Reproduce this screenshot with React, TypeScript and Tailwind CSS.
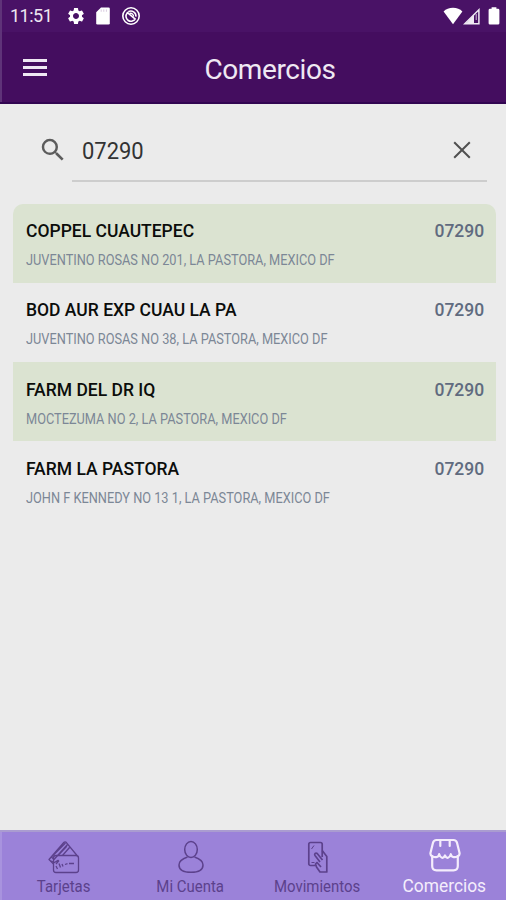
import { MdSearch, MdSettings } from 'react-icons/md';

type Store = {
  name: string;
  address: string;
  zip: string;
};

const stores: Store[] = [
  { name: 'COPPEL CUAUTEPEC', address: 'JUVENTINO ROSAS NO 201, LA PASTORA, MEXICO DF', zip: '07290' },
  { name: 'BOD AUR EXP CUAU LA PA', address: 'JUVENTINO ROSAS NO 38, LA PASTORA, MEXICO DF', zip: '07290' },
  { name: 'FARM DEL DR IQ', address: 'MOCTEZUMA NO 2, LA PASTORA, MEXICO DF', zip: '07290' },
  { name: 'FARM LA PASTORA', address: 'JOHN F KENNEDY NO 13 1, LA PASTORA, MEXICO DF', zip: '07290' },
];

function StatusBar() {
  return (
    <div className="flex h-8 items-center bg-[#491266] pr-[6px] pb-px pl-[10px] text-white shadow-[inset_2px_0_0_#5f3379]">
      <span className="w-[56px] text-[18px] leading-8 tracking-[-0.5px] text-[#eee6f2]">11:51</span>
      <MdSettings className="h-5 w-5" />
      <svg viewBox="0 0 14 18" className="ml-[10px] h-[18px] w-[14px]" fill="currentColor">
        <path d="M5 0.5h7.5a1.3 1.3 0 0 1 1.3 1.3v14.4a1.3 1.3 0 0 1-1.3 1.3h-11a1.3 1.3 0 0 1-1.3-1.3V5.3z" />
        <path d="M5.2 2.4v2.4M7.8 2.4v2.4M10.4 2.4v2.4" stroke="#d9cbe0" strokeWidth="1" />
      </svg>
      <svg viewBox="0 0 20 20" className="ml-[11px] h-5 w-5" fill="none" stroke="currentColor">
        <circle cx="10" cy="10" r="8.2" strokeWidth="1.6" />
        <path d="M6.2 7a5 5 0 1 0 8.3 5.4M7.3 5.8a5 5 0 0 1 7.6 4.8M5.8 6.2l8.8 7.2" strokeWidth="1.6" />
        <path d="M8.6 7.4a3 3 0 0 1 3.9 3.2" strokeWidth="1.3" />
      </svg>
      <div className="ml-auto flex items-center">
        <svg viewBox="0 0 20 18" className="h-[18px] w-5" fill="currentColor">
          <path d="M0.6 4.6C3 1.9 6.2 0.8 10 0.8s7 1.1 9.4 3.8L10 17.2z" />
        </svg>
        <svg viewBox="0 0 18 18" className="h-[18px] w-[18px]" fill="none">
          <path d="M1.8 16.8H15.9V2.7z" stroke="#efe9f3" strokeWidth="1.5" />
          <path d="M11 7.5V16.5H3z" fill="#efe9f3" />
          <path d="M13.2 7v6" stroke="#efe9f3" strokeWidth="0.8" />
        </svg>
        <svg viewBox="0 0 12 18" className="ml-[7px] h-[18px] w-3" fill="currentColor">
          <path d="M3.6 0.2h4.8v1.6h1.6a1.4 1.4 0 0 1 1.4 1.4v13a1.4 1.4 0 0 1-1.4 1.4H2a1.4 1.4 0 0 1-1.4-1.4v-13A1.4 1.4 0 0 1 2 1.8h1.6z" />
        </svg>
      </div>
    </div>
  );
}

function Header() {
  return (
    <header className="grid h-[72px] grid-cols-[1fr_auto_1fr] items-center border-b-2 border-[#310551] bg-[#440d5f] shadow-[inset_2px_0_0_#5f3379]">
      <button type="button" aria-label="Menu" className="ml-[23px] flex w-6 flex-col gap-[4px] pt-px">
        <span className="h-[3px] bg-[#efe7f3]" />
        <span className="h-[3px] bg-[#efe7f3]" />
        <span className="h-[3px] bg-[#efe7f3]" />
      </button>
      <h1 className="pt-[5px] pl-[34px] text-[28px] leading-8 tracking-[-0.4px] text-[#efe8f3]">Comercios</h1>
    </header>
  );
}

function SearchBar() {
  return (
    <div className="flex h-[78px] pr-[19px] pl-[38px]">
      <MdSearch className="mt-[31px] h-[30px] w-[30px] text-[#5c5c5c]" />
      <div className="ml-[4px] flex flex-1 items-center justify-between border-b-2 border-[#cdcdcd] pt-[18px] pr-[16px] pl-[10px]">
        <span className="origin-left scale-x-[0.915] text-[24px] leading-8 text-[#333333]">07290</span>
        <svg viewBox="0 0 18 18" className="mb-[2px] h-[18px] w-[18px]" fill="none" stroke="#505050" strokeWidth="2">
          <path d="M1.2 1.2l15.6 15.6M16.8 1.2L1.2 16.8" />
        </svg>
      </div>
    </div>
  );
}

function StoreRow({ store }: { store: Store }) {
  return (
    <li className="h-[79.25px] pt-[16.5px] pr-[12px] pl-[13px] odd:bg-[#dbe3d1]">
      <div className="flex justify-between text-[18px] leading-[22px] font-medium">
        <span className="origin-left scale-x-[0.972] text-[#0b0d0b]">{store.name}</span>
        <span className="origin-right scale-x-[0.972] text-[#606b7f]">{store.zip}</span>
      </div>
      <p className="mt-[9px] origin-left scale-x-[0.912] text-[14px] leading-[18px] text-[#7c8796]">{store.address}</p>
    </li>
  );
}

function CardsIcon() {
  return (
    <svg viewBox="0 0 32 34" className="h-[34px] w-8" fill="none" stroke="currentColor" strokeWidth="1.3" strokeLinejoin="round">
      <rect x="5.5" y="15.500" width="25" height="17" rx="2.5" />
      <path d="M5.5 24L1 19.500 16 2.300a1.500 1.500 0 0 1 2.200 0L29 15.500M3.500 17l2.500 2.500L19.500 4.500M2.200 18.400L17.500 3M10 15.500l9-9.500M21.500 7.500L14.500 15.500" />
      <path d="M3 21l3.500 1.500 4-2.500M8 24l3-3.500M8 26l1.500 3M11 23.500l1.500 4M14 24l1 2.500M17 24.500l2.500-.8M21 23.500h5" />
    </svg>
  );
}

function UserIcon() {
  return (
    <svg viewBox="0 0 28 34" className="h-[34px] w-7" fill="none" stroke="currentColor" strokeWidth="1.500">
      <ellipse cx="14" cy="9.500" rx="6.300" ry="8" />
      <path d="M10.500 17C4.500 19 2 21.300 2 25c0 4.800 4 7.300 12 7.300s12-2.500 12-7.300c0-3.700-2.500-6-8.500-8" />
    </svg>
  );
}

function PhoneIcon() {
  return (
    <svg viewBox="0 0 22 34" className="h-[34px] w-[22px]" fill="none" stroke="currentColor" strokeWidth="1.700" strokeLinejoin="round">
      <path d="M8.500 25.500H3.500a1.700 1.700 0 0 1-1.700-1.700V4.200A1.700 1.700 0 0 1 3.500 2.500h10a1.700 1.700 0 0 1 1.700 1.700V17" />
      <path d="M15.200 10.500l4.600 6v15.500H13l-3.500-5-1-3 1.500-1.500 4 4.500M15.500 20l-5.300-6.500c-1.500-1.200-3.200.4-2.200 2l5 6.500" />
      <path d="M4.500 9l2.500-3.500M4.500 22.500h3" strokeWidth="1" />
    </svg>
  );
}

function StoreIcon() {
  return (
    <svg viewBox="0 0 32 34" className="h-[34px] w-8" fill="none" stroke="currentColor" strokeWidth="2.200" strokeLinejoin="round" strokeLinecap="round">
      <path d="M3.200 18.200C1.800 17.600 1.200 16.400 1.500 14.800L4 4.800C4.500 2.800 5.500 2 7.500 2h17c2 0 3 .8 3.500 2.800L30.500 14.800c.3 1.600-.3 2.800-1.700 3.400" />
      <path d="M3.200 18.200c3.500 2 6.800.8 7-2 1.200 4 4.200 5 5.800 1.300 1.600 3.700 4.600 2.700 5.800-1.300.2 2.800 3.500 4 7 2" />
      <path d="M11.300 2.500v5.500M20.700 2.500v5.500M3.200 18.500v9.500c0 3 1.300 4.300 4.300 4.300h17c3 0 4.300-1.300 4.300-4.300v-9.500" />
    </svg>
  );
}

const tabs = [
  { label: 'Tarjetas', icon: CardsIcon },
  { label: 'Mi Cuenta', icon: UserIcon },
  { label: 'Movimientos', icon: PhoneIcon },
  { label: 'Comercios', icon: StoreIcon },
];

function TabBar({ active }: { active: string }) {
  return (
    <nav className="grid h-[70px] grid-cols-[127px_127px_127px_1fr] border-t-2 border-[#aa9cd0] bg-[#9b82d9] shadow-[inset_2px_0_0_#a893de]">
      {tabs.map(({ label, icon: Icon }) => (
        <button
          key={label}
          type="button"
          className={
            label === active
              ? 'flex flex-col items-center pt-[6px] pl-[2px] text-[18px] text-[#f4edfc]'
              : 'flex flex-col items-center pt-[8px] text-[16px] text-[#5c418c]'
          }
        >
          <Icon />
          <span className={label === active ? 'scale-x-[0.965] leading-[28px]' : 'scale-x-[0.935] leading-[26px]'}>
            {label}
          </span>
        </button>
      ))}
    </nav>
  );
}

export default function App() {
  return (
    <div className="flex h-[900px] w-[506px] flex-col overflow-hidden bg-[#ebebeb] font-[Roboto,sans-serif]">
      <StatusBar />
      <Header />
      <main className="flex-1">
        <SearchBar />
        <ul className="mt-[21.5px] mr-[10px] ml-[13px] overflow-hidden rounded-t-[10px]">
          {stores.map((store) => (
            <StoreRow key={store.name} store={store} />
          ))}
        </ul>
      </main>
      <TabBar active="Comercios" />
    </div>
  );
}
